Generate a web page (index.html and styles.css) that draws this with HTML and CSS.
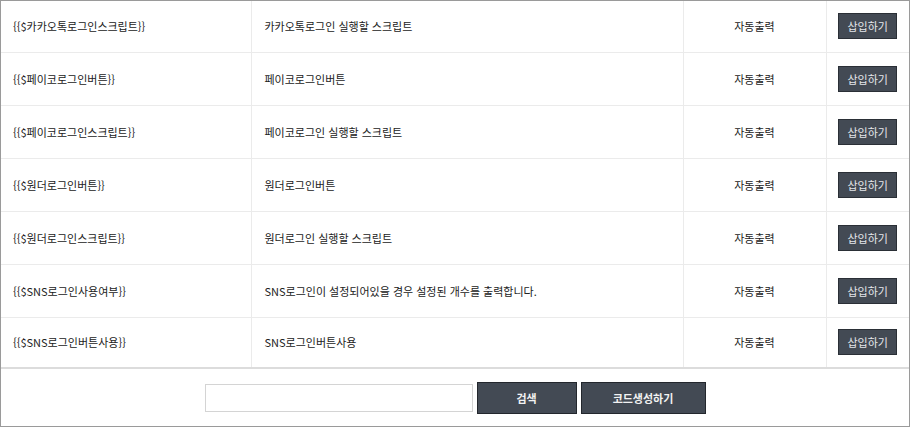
FILE: index.html
```html
<!DOCTYPE html>
<html lang="ko">
<head>
<meta charset="utf-8">
<link rel="stylesheet" href="styles.css">
</head>
<body>
<div class="panel">
  <table class="code-table">
    <colgroup>
      <col class="c1"><col class="c2"><col class="c3"><col class="c4">
    </colgroup>
    <tbody>
      <tr><td class="code">{{$카카오톡로그인스크립트}}</td><td class="desc">카카오톡로그인 실행할 스크립트</td><td class="mode">자동출력</td><td class="act"><button class="btn-insert">삽입하기</button></td></tr>
      <tr><td class="code">{{$페이코로그인버튼}}</td><td class="desc">페이코로그인버튼</td><td class="mode">자동출력</td><td class="act"><button class="btn-insert">삽입하기</button></td></tr>
      <tr><td class="code">{{$페이코로그인스크립트}}</td><td class="desc">페이코로그인 실행할 스크립트</td><td class="mode">자동출력</td><td class="act"><button class="btn-insert">삽입하기</button></td></tr>
      <tr><td class="code">{{$원더로그인버튼}}</td><td class="desc">원더로그인버튼</td><td class="mode">자동출력</td><td class="act"><button class="btn-insert">삽입하기</button></td></tr>
      <tr><td class="code">{{$원더로그인스크립트}}</td><td class="desc">원더로그인 실행할 스크립트</td><td class="mode">자동출력</td><td class="act"><button class="btn-insert">삽입하기</button></td></tr>
      <tr><td class="code">{{$SNS로그인사용여부}}</td><td class="desc">SNS로그인이 설정되어있을 경우 설정된 개수를 출력합니다.</td><td class="mode">자동출력</td><td class="act"><button class="btn-insert">삽입하기</button></td></tr>
      <tr><td class="code">{{$SNS로그인버튼사용}}</td><td class="desc">SNS로그인버튼사용</td><td class="mode">자동출력</td><td class="act"><button class="btn-insert">삽입하기</button></td></tr>
    </tbody>
  </table>
  <div class="footer">
    <input class="search-input" type="text">
    <button class="btn-main btn-search">검색</button>
    <button class="btn-main btn-gen">코드생성하기</button>
  </div>
</div>
</body>
</html>
```
FILE: styles.css
```css
* { box-sizing: border-box; }
html, body { margin: 0; padding: 0; background: #fff; }
body {
  font-family: "Noto Sans CJK KR", "Noto Sans", sans-serif;
  font-size: 11px;
  color: #222;
}
.panel {
  width: 910px;
  height: 427px;
  border: 1px solid #9a9a9a;
  display: flex;
  flex-direction: column;
}
.code-table {
  width: 100%;
  border-collapse: collapse;
  table-layout: fixed;
}
.c1 { width: 250px; }
.c2 { width: 432px; }
.c3 { width: 143px; }
.c4 { width: auto; }
.code-table td {
  height: 53px;
  padding: 0 12px;
  border-bottom: 1px solid #ebebeb;
  border-right: 1px solid #ebebeb;
  vertical-align: middle;
  white-space: nowrap;
}
.code-table tr:first-child td { height: 51px; }
.code-table tr:last-child td { height: 51px; border-bottom: 2px solid #dcdcdc; }
.code-table td:last-child { border-right: none; }
.code-table td.desc { padding-left: 13px; }
.code-table td.mode, .code-table td.act { text-align: center; padding: 0; }
.btn-insert {
  width: 59px;
  height: 26px;
  background: #434a54;
  border: 1px solid #2a2f36;
  color: #e4e6ea;
  font-family: inherit;
  font-size: 11px;
  padding: 0;
  cursor: pointer;
}
.footer {
  flex: 1;
  display: flex;
  justify-content: center;
  align-items: center;
  gap: 4px;
}
.search-input {
  width: 268px;
  height: 28px;
  border: 1px solid #d4d4d4;
  margin: 0;
  padding: 0 6px;
}
.btn-main {
  height: 32px;
  background: #434a54;
  border: 1px solid #23272d;
  color: #f2f2f2;
  font-family: inherit;
  font-size: 11px;
  font-weight: bold;
  padding: 0;
  cursor: pointer;
}
.btn-search { width: 100px; }
.btn-gen { width: 125px; }
```
